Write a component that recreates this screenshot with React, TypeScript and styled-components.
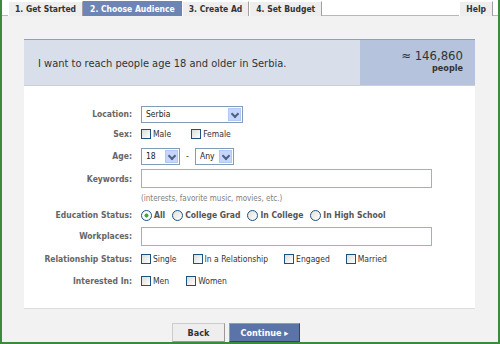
import styled, { createGlobalStyle } from "styled-components";

const GlobalStyle = createGlobalStyle`
  html, body {
    margin: 0;
    padding: 0;
    background: #ffffff;
  }
  * {
    box-sizing: border-box;
  }
`;

const FONT = `"DejaVu Sans Condensed", "DejaVu Sans", sans-serif`;

const tabs = [
  { label: "1. Get Started" },
  { label: "2. Choose Audience", active: true },
  { label: "3. Create Ad" },
  { label: "4. Set Budget" },
];

const relationship = ["Single", "In a Relationship", "Engaged", "Married"];
const education = ["All", "College Grad", "In College", "In High School"];

export default function App() {
  return (
    <>
      <GlobalStyle />
      <Frame>
        <TabBar>
          {tabs.map((t) => (
            <Tab key={t.label} $active={t.active}>
              {t.label}
            </Tab>
          ))}
          <Spacer />
          <Tab>Help</Tab>
        </TabBar>

        <Content>
          <Panel>
            <Banner>
              <BannerText>I want to reach people age 18 and older in Serbia.</BannerText>
              <Estimate>
                <Count>≈ 146,860</Count>
                <People>people</People>
              </Estimate>
            </Banner>

            <Form>
              <Row $h={20}>
                <Label>Location:</Label>
                <Select $w={102}>
                  <span>Serbia</span>
                  <Arrow />
                </Select>
              </Row>

              <Row $h={20}>
                <Label>Sex:</Label>
                <Options $gap={20}>
                  <Option>
                    <Check />
                    Male
                  </Option>
                  <Option>
                    <Check />
                    Female
                  </Option>
                </Options>
              </Row>

              <Row $h={24}>
                <Label>Age:</Label>
                <Options $gap={6}>
                  <Select $w={39}>
                    <span>18</span>
                    <Arrow />
                  </Select>
                  <Dash>-</Dash>
                  <Select $w={39}>
                    <span>Any</span>
                    <Arrow />
                  </Select>
                </Options>
              </Row>

              <Row $h={21}>
                <Label>Keywords:</Label>
                <TextInput />
              </Row>

              <Row $h={18}>
                <span />
                <Hint>(interests, favorite music, movies, etc.)</Hint>
              </Row>

              <Row $h={16}>
                <Label>Education Status:</Label>
                <Options $gap={7}>
                  {education.map((e, i) => (
                    <Option key={e} $bold>
                      <Radio $checked={i === 0} />
                      {e}
                    </Option>
                  ))}
                </Options>
              </Row>

              <Row $h={26}>
                <Label>Workplaces:</Label>
                <TextInput />
              </Row>

              <Row $h={20}>
                <Label>Relationship Status:</Label>
                <Options $gap={16}>
                  {relationship.map((r) => (
                    <Option key={r}>
                      <Check />
                      {r}
                    </Option>
                  ))}
                </Options>
              </Row>

              <Row $h={24}>
                <Label>Interested In:</Label>
                <Options $gap={17}>
                  <Option>
                    <Check />
                    Men
                  </Option>
                  <Option>
                    <Check />
                    Women
                  </Option>
                </Options>
              </Row>
            </Form>
          </Panel>

          <Buttons>
            <Button>Back</Button>
            <Button $primary>Continue ▸</Button>
          </Buttons>
        </Content>
      </Frame>
    </>
  );
}

const Frame = styled.div`
  width: 500px;
  height: 344px;
  background: #f2f2f2;
  border: 2px solid #3c8a3c;
  border-top: none;
  font-family: ${FONT};
  color: #333;
  overflow: hidden;
`;

const TabBar = styled.div`
  display: flex;
  align-items: flex-start;
  height: 16px;
  padding: 1px 5px 0 6px;
  background: #ffffff;
  border-bottom: 1px solid #b8b8b8;
`;

const Tab = styled.div<{ $active?: boolean }>`
  height: 15px;
  padding: 0 6px;
  display: flex;
  align-items: center;
  font-size: 8.5px;
  font-weight: bold;
  white-space: nowrap;
  color: ${(p) => (p.$active ? "#ffffff" : "#333")};
  background: ${(p) => (p.$active ? "#6d84b4" : "#eeeeee")};
  border-top: 1px solid ${(p) => (p.$active ? "#6d84b4" : "#ffffff")};
  border-left: 1px solid ${(p) => (p.$active ? "#6d84b4" : "#ffffff")};
  border-right: 1px solid ${(p) => (p.$active ? "#6d84b4" : "#a0a0a0")};
`;

const Spacer = styled.div`
  flex: 1;
`;

const Content = styled.div`
  padding: 23px 23px 0 22px;
`;

const Panel = styled.div`
  background: #ffffff;
  border-bottom: 1px solid #dddddd;
`;

const Banner = styled.div`
  display: flex;
  height: 47px;
  border-top: 1px solid #8c9ec6;
  border-bottom: 1px solid #c9cfd9;
`;

const BannerText = styled.div`
  flex: 1;
  display: flex;
  align-items: center;
  padding: 2px 0 0 14px;
  background: #d8dfea;
  font-size: 11px;
  color: #333;
`;

const Estimate = styled.div`
  width: 115px;
  background: #b5c3dc;
  display: flex;
  flex-direction: column;
  align-items: flex-end;
  justify-content: center;
  padding: 0 12px 2px 0;
  line-height: 1.1;
`;

const Count = styled.div`
  font-size: 13px;
  color: #333;
`;

const People = styled.div`
  font-size: 9px;
  font-weight: bold;
  color: #333;
`;

const Form = styled.div`
  padding: 18px 0 15px;
`;

const Row = styled.div<{ $h: number }>`
  display: grid;
  grid-template-columns: 108px 1fr;
  column-gap: 9px;
  align-items: center;
  height: ${(p) => p.$h}px;
`;

const Label = styled.div`
  text-align: right;
  font-size: 8.5px;
  font-weight: bold;
  color: #666;
`;

const Options = styled.div<{ $gap: number }>`
  display: flex;
  align-items: center;
  gap: ${(p) => p.$gap}px;
`;

const Option = styled.div<{ $bold?: boolean }>`
  display: flex;
  align-items: center;
  gap: 2px;
  font-size: 8.5px;
  font-weight: ${(p) => (p.$bold ? "bold" : "normal")};
  color: ${(p) => (p.$bold ? "#555" : "#333")};
`;

const Check = styled.span`
  width: 10px;
  height: 10px;
  border: 1px solid #1c5180;
  background: linear-gradient(135deg, #dcdcd7, #ffffff);
`;

const Radio = styled.span<{ $checked?: boolean }>`
  width: 11px;
  height: 11px;
  border-radius: 50%;
  border: 1px solid #1c5180;
  background: ${(p) =>
    p.$checked
      ? "radial-gradient(circle, #3fa83f 0 1.8px, #ffffff 2.3px)"
      : "linear-gradient(135deg, #e0e0db, #ffffff)"};
`;

const Select = styled.div<{ $w: number }>`
  width: ${(p) => p.$w}px;
  height: 17px;
  border: 1px solid #7f9db9;
  background: #ffffff;
  display: flex;
  align-items: center;
  justify-content: space-between;
  padding: 0 1px 0 4px;
  font-size: 8.5px;
  color: #222;
`;

const Arrow = styled.span`
  width: 13px;
  height: 13px;
  background: #c6d6fb;
  border: 1px solid #b4c8f6;
  position: relative;
  &::after {
    content: "";
    position: absolute;
    left: 3px;
    top: 2px;
    width: 4px;
    height: 4px;
    border-right: 2px solid #4d6185;
    border-bottom: 2px solid #4d6185;
    transform: rotate(45deg);
  }
`;

const Dash = styled.span`
  font-size: 9px;
  color: #333;
`;

const TextInput = styled.div`
  width: 291px;
  height: 19px;
  border: 1px solid #a4abd1;
  background: #ffffff;
`;

const Hint = styled.div`
  font-size: 8px;
  color: #808080;
  padding-top: 1px;
`;

const Buttons = styled.div`
  display: flex;
  gap: 4px;
  padding: 14px 0 0 148px;
`;

const Button = styled.div<{ $primary?: boolean }>`
  height: 19px;
  display: flex;
  align-items: center;
  justify-content: center;
  width: ${(p) => (p.$primary ? "71px" : "53px")};
  font-size: 9px;
  font-weight: bold;
  color: ${(p) => (p.$primary ? "#ffffff" : "#333")};
  background: ${(p) => (p.$primary ? "#5b74a8" : "#eeeeee")};
  border: 1px solid ${(p) => (p.$primary ? "#29447e" : "#999999")};
  border-top-color: ${(p) => (p.$primary ? "#8a9cc2" : "#cccccc")};
  border-left-color: ${(p) => (p.$primary ? "#8a9cc2" : "#cccccc")};
`;
